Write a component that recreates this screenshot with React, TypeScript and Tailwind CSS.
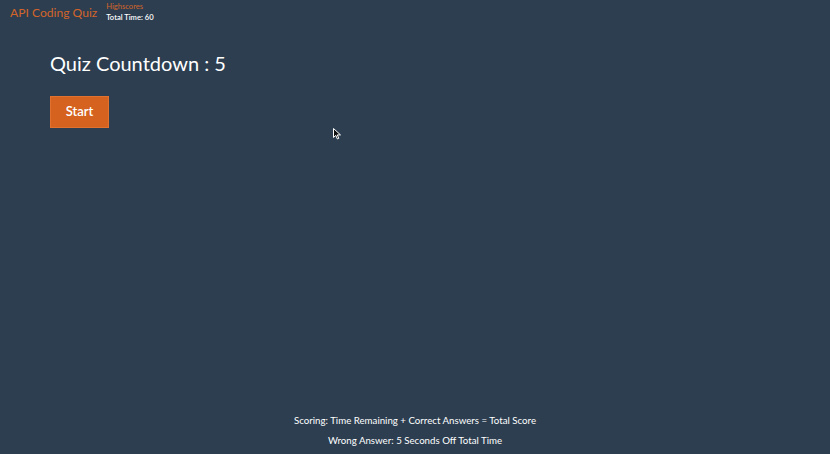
export default function App() {
  return (
    <div
      className="relative flex flex-col h-[454px] w-full bg-[#2c3e50] text-white overflow-hidden"
      style={{ fontFamily: 'Lato, "Noto Sans", sans-serif' }}
    >
      {/* Header */}
      <header className="flex items-start gap-[9px] pl-[10px] pt-[1px]">
        <h1 className="text-[12.1px] leading-none text-[#d4652a] mt-[6px]">API Coding Quiz</h1>
        <div className="flex flex-col text-[7.6px] leading-[11px]">
          <a href="#" className="text-[#d4652a]">Highscores</a>
          <span className="font-semibold">Total Time: 60</span>
        </div>
      </header>

      {/* Quiz start */}
      <main className="flex-1 pl-[50px] pt-[30px]">
        <h2 className="text-[20px] leading-none">Quiz Countdown : 5</h2>
        <button className="mt-[23px] w-[59px] h-[32px] bg-[#d5621f] border border-[#e0712f] text-white text-[13px] font-semibold">
          Start
        </button>
      </main>

      {/* Footer */}
      <footer className="flex flex-col items-center gap-[8px] pb-[8px] text-[9.7px] leading-[12px]">
        <p>Scoring: Time Remaining + Correct Answers = Total Score</p>
        <p>Wrong Answer: 5 Seconds Off Total Time</p>
      </footer>

      {/* Mouse cursor */}
      <svg className="absolute left-[333px] top-[128px]" width="9" height="12" viewBox="0 0 9 12">
        <path d="M0.5 0.5 L0.5 9.5 L2.8 7.4 L4.4 11 L5.8 10.4 L4.3 6.9 L7.5 6.9 Z" fill="#111" stroke="#fff" strokeWidth="1" />
      </svg>
    </div>
  );
}
